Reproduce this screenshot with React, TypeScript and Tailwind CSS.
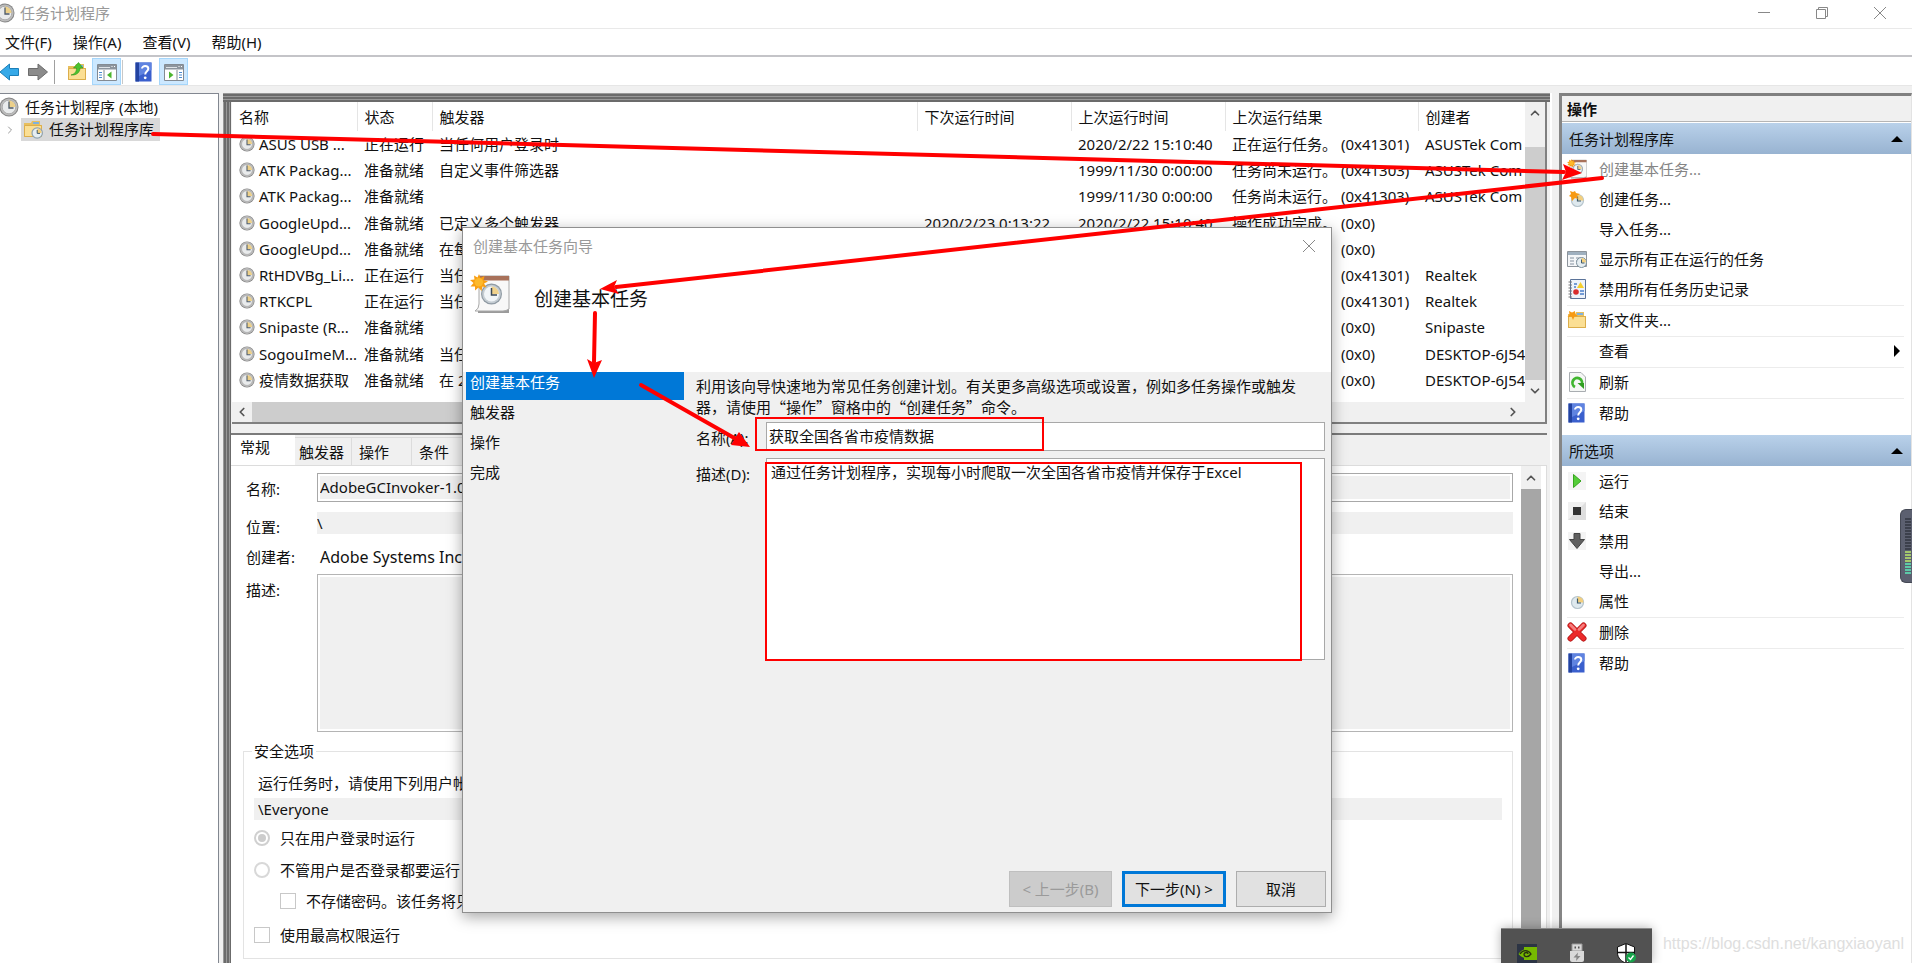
import React from 'react'
import { ChevronDown, ChevronLeft, ChevronRight, ChevronUp } from 'lucide-react'

type IconProps = { className?: string }

const ClockIcon: React.FC<IconProps> = ({ className = 'size-4' }) => (
  <svg viewBox="0 0 20 20" className={className} aria-hidden="true">
    <circle cx="10" cy="10" r="9.5" fill="#858585" />
    <circle cx="10" cy="10" r="8.6" fill="#bdbdbd" />
    <circle cx="10" cy="10" r="6.8" fill="#e9ebec" stroke="#a3a3a3" strokeWidth="0.8" />
    <path d="M10 10V3.6A6.4 6.4 0 0 1 16.4 10Z" fill="#ecd08a" />
    <path d="M10 4.5V11H14.5" fill="none" stroke="#4d5a66" strokeWidth="1.3" />
  </svg>
)

const SmallClockIcon: React.FC<{ star?: boolean }> = ({ star }) => (
  <svg viewBox="0 0 20 20" className="size-5" aria-hidden="true">
    <circle cx="10.5" cy="11.5" r="6" fill="#dfe9ee" stroke="#b4c3cb" strokeWidth="1.2" />
    <path d="M10.5 11.5V5.6A6 6 0 0 1 16.5 11.5Z" fill="#f3cf7e" />
    <path d="M10.5 7.5V12H14" fill="none" stroke="#3e5a6b" strokeWidth="1.2" />
    {star && (
      <path d="M3 2l3 1 2-1 1 2 4 1-3 2 1 3-3-1-3 3-1-4-2-1 2-2Z" fill="#f79a12" />
    )}
  </svg>
)

const HelpIcon: React.FC<IconProps> = ({ className = 'size-5' }) => (
  <svg viewBox="0 0 20 20" className={className} aria-hidden="true">
    <rect x="1.5" y="0.5" width="16" height="19" fill="#3a5fcd" />
    <rect x="1.5" y="0.5" width="3.5" height="19" fill="#2343a0" />
    <path d="M5 0.5H17.5V8L5 14Z" fill="#5f83e0" />
    <path
      d="M8 6.6C8 3.2 14.3 3.2 14.3 6.8C14.3 9.2 11.2 9.4 11.2 12.6"
      fill="none"
      stroke="#fff"
      strokeWidth="2"
    />
    <circle cx="11.2" cy="15.8" r="1.4" fill="#fff" />
  </svg>
)

const FolderBase = () => (
  <>
    <path d="M1 4H8L9 2H17V6H19V18H1Z" fill="#e8bf5d" />
    <path d="M10 3H16V5H10Z" fill="#7fb2e0" />
    <path d="M1.5 6.5H18.5V17.5H1.5Z" fill="#fbdf94" stroke="#dcae4b" />
  </>
)

const FolderClockIcon = () => (
  <svg viewBox="0 0 20 20" className="size-5" aria-hidden="true">
    <FolderBase />
    <circle cx="14.2" cy="14" r="5.2" fill="#e6eef2" stroke="#8fa2ae" strokeWidth="1.2" />
    <path d="M14.2 14V9.6A4.5 4.5 0 0 1 18.6 14Z" fill="#f3cf7e" />
    <path d="M14.2 11V14.4H17" fill="none" stroke="#3e5a6b" />
  </svg>
)

const FolderUpIcon = () => (
  <svg viewBox="0 0 20 20" className="size-5" aria-hidden="true">
    <FolderBase />
    <path
      d="M4 13C8 12 9.5 9.5 9.5 6H6.5L11.5 0.5L16 6H13C13 10 10 13.5 4 13Z"
      fill="#4cc32f"
      stroke="#2f9419"
      strokeWidth="0.6"
    />
  </svg>
)

const FolderNewIcon = () => (
  <svg viewBox="0 0 20 20" className="size-5" aria-hidden="true">
    <FolderBase />
    <path d="M2 1L5 2.5L8 1L8 4L11 6L7.5 6.5L6 10L4.5 6.5L0.5 7L2.5 4.5Z" fill="#f79a12" />
  </svg>
)

const BasicTaskIcon: React.FC<IconProps> = ({ className = 'size-5' }) => (
  <svg viewBox="0 0 40 40" className={className} aria-hidden="true">
    <path d="M8 34H39V39H8Z" fill="#9b9b9b" />
    <path d="M9 2H39V35Q36 37 33 37H5Q9 35 9 30Z" fill="#f8f8f8" stroke="#a8a8a8" />
    <path d="M9 2H39V6.5H9Z" fill="#a8715a" />
    <circle cx="21.5" cy="20" r="10.5" fill="#8f9aa3" />
    <circle cx="21.5" cy="20" r="9.3" fill="#c4ccd2" />
    <circle cx="21.5" cy="20" r="7.5" fill="#f1f5f8" />
    <path d="M21.5 20V12.5A7.5 7.5 0 0 1 29 20Z" fill="#f0d28c" />
    <path d="M21.5 14V21H27" fill="none" stroke="#3d4a55" strokeWidth="1.5" />
    <path
      d="M9 0L10.5 4L14.5 2L13.5 6L18 7.5L14 9.5L16.500 13.500L12.500 12.500L11.500 17L8.500 13.500L5 16.500L5 12.500L0.500 12.500L3.500 9L0 6L4.500 5.500L4 1.500L7.500 3.500Z"
      fill="#f99f12"
    />
    <circle cx="8.800" cy="8.300" r="4.300" fill="#fdb92a" />
  </svg>
)

const RunningTasksIcon = () => (
  <svg viewBox="0 0 20 20" className="size-5" aria-hidden="true">
    <path d="M0.5 2.5H19.5V17.5H0.5Z" fill="#f4f6f8" stroke="#8d949b" />
    <path d="M1 3H19V6H1Z" fill="#9fb0bf" />
    <path d="M3 9H7M9 9H13M3 12H7M9 12H11M3 15H7" stroke="#8592a0" strokeWidth="1.2" />
    <circle cx="14.5" cy="13.5" r="5" fill="#e6eef2" stroke="#7c909c" />
    <path d="M14.5 13.5V9A4.5 4.5 0 0 1 19 13.5Z" fill="#f3cf7e" />
    <path d="M14.5 10.5V14H17.5" fill="none" stroke="#3e5a6b" />
  </svg>
)

const HistoryIcon = () => (
  <svg viewBox="0 0 20 20" className="size-5" aria-hidden="true">
    <path d="M3.5 0.5H18.5V19.5H3.5Z" fill="#eef3fa" stroke="#5b7399" />
    <path d="M1.5 3H5M1.5 6H5M1.5 9H5M1.5 12H5M1.5 15H5M1.5 18H5" stroke="#777" />
    <path d="M13.5 3L17 9H10Z" fill="#f6cf2c" />
    <circle cx="9" cy="13" r="2.8" fill="#d92c2c" />
    <path d="M7 5H10M7 8H9M13 12H17M13 15H17" stroke="#4b7fc9" strokeWidth="1.3" />
  </svg>
)

const RefreshIcon = () => (
  <svg viewBox="0 0 20 20" className="size-5" aria-hidden="true">
    <path d="M2.5 0.5H14L18.5 5V19.5H2.5Z" fill="#f5f7f5" stroke="#a9adb1" />
    <path d="M8 15A4.800 4.800 0 1 1 14.500 13" fill="none" stroke="#3fb52e" strokeWidth="2.8" />
    <path d="M10.5 11H17V17Z" fill="#2f9e20" />
  </svg>
)

const RunIcon = () => (
  <svg viewBox="0 0 20 20" className="size-5" aria-hidden="true">
    <path d="M1 1H19V19H1Z" fill="#f4f4f4" />
    <path d="M6.5 3.5L14 10L6.5 16.5Z" fill="#54cd38" stroke="#37a51f" />
  </svg>
)

const StopIcon = () => (
  <svg viewBox="0 0 20 20" className="size-5" aria-hidden="true">
    <path d="M1 1H19V19H1Z" fill="#dedede" />
    <path d="M1 1H19L1 19Z" fill="#f0f0f0" />
    <path d="M6 6H14V14H6Z" fill="#333" />
  </svg>
)

const DisableIcon = () => (
  <svg viewBox="0 0 20 20" className="size-5" aria-hidden="true">
    <path d="M1 1H19V19H1Z" fill="#f4f4f4" />
    <path d="M7 2.5H13V8.5H17.5L10 17.5L2.5 8.5H7Z" fill="#606060" stroke="#444" />
  </svg>
)

const DeleteIcon = () => (
  <svg viewBox="0 0 20 20" className="size-5" aria-hidden="true">
    <path d="M3.5 3.5L16.5 16.5M16.5 3.5L3.5 16.5" stroke="#b01515" strokeWidth="6" strokeLinecap="round" />
    <path d="M3.5 3.5L16.5 16.5M16.5 3.5L3.5 16.5" stroke="#ec2b2b" strokeWidth="4.5" strokeLinecap="round" />
    <path d="M3.5 3L8 7.5M16.5 3L12 7.5" stroke="#f58080" strokeWidth="2.5" strokeLinecap="round" />
  </svg>
)

const ArrowIcon: React.FC<{ forward?: boolean }> = ({ forward }) =>
  forward ? (
    <svg viewBox="0 0 20 18" className="h-[18px] w-5" aria-hidden="true">
      <path d="M0.5 5.5H10V1L19.5 9L10 17V12.5H0.5Z" fill="#8b8b8b" stroke="#6c6c6c" />
    </svg>
  ) : (
    <svg viewBox="0 0 20 18" className="h-[18px] w-5" aria-hidden="true">
      <path d="M18.5 5.5H9.5V1L0 9L9.5 17V12.5H18.5Z" fill="#36a9e8" stroke="#1c7fb8" />
    </svg>
  )

const PaneIcon: React.FC<{ right?: boolean }> = ({ right }) => (
  <svg viewBox="0 0 20 18" className="h-[18px] w-5" aria-hidden="true">
    <path d="M0.5 1.5H19.5V17.5H0.5Z" fill="#fff" stroke="#848b93" />
    <path d="M1 2H19V6.5H1Z" fill="#8d959e" />
    <path d="M2 4.5H13" stroke="#dfe3e7" />
    <path d="M14.5 3.5H15.5M17 3.5H18" stroke="#fff" />
    {right ? (
      <>
        <path d="M13 7V17" stroke="#848b93" />
        <path d="M15 9.5H18M15 12H18M15 14.5H18" stroke="#4a8bd0" />
        <path d="M5 8.5L9.5 12L5 15.5Z" fill="#4cb52f" />
      </>
    ) : (
      <>
        <path d="M7 7V17" stroke="#848b93" />
        <path d="M2 9.5H5M2 12H5M2 14.5H5" stroke="#4a8bd0" />
        <path d="M14.5 8.5L10 12L14.5 15.5Z" fill="#4cb52f" />
      </>
    )}
  </svg>
)

const running = '正在运行'
const ready = '准备就绪'
const onLogon = '当任何用户登录时'
const resultRunning = '正在运行任务。 (0x41301)'
const resultNever = '任务尚未运行。 (0x41303)'
const resultOk = '操作成功完成。 (0x0)'

const columns = [
  { title: '名称', width: 'w-[125px]' },
  { title: '状态', width: 'w-[75px]' },
  { title: '触发器', width: '' },
  { title: '下次运行时间', width: 'w-[154px]' },
  { title: '上次运行时间', width: 'w-[154px]' },
  { title: '上次运行结果', width: 'w-[193px]' },
  { title: '创建者', width: 'w-[107px]' },
]

const tasks = [
  ['ASUS USB ...', running, onLogon, '', '2020/2/22 15:10:40', resultRunning, 'ASUSTek Com'],
  ['ATK Packag...', ready, '自定义事件筛选器', '', '1999/11/30 0:00:00', resultNever, 'ASUSTek Com'],
  ['ATK Packag...', ready, '', '', '1999/11/30 0:00:00', resultNever, 'ASUSTek Com'],
  ['GoogleUpd...', ready, '已定义多个触发器', '2020/2/23 0:13:22', '2020/2/22 15:10:40', resultOk, ''],
  ['GoogleUpd...', ready, '在每天', '', '', resultOk, ''],
  ['RtHDVBg_Li...', running, '当任何', '', '', resultRunning, 'Realtek'],
  ['RTKCPL', running, '当任何', '', '', resultRunning, 'Realtek'],
  ['Snipaste (R...', ready, '', '', '', resultOk, 'Snipaste'],
  ['SogouImeM...', ready, '当任何', '', '', resultOk, 'DESKTOP-6J54'],
  ['疫情数据获取', ready, '在 20', '', '', resultOk, 'DESKTOP-6J54'],
]

type Action = {
  label: string
  icon?: React.ReactNode
  line?: boolean
  muted?: boolean
  submenu?: boolean
}

const libraryActions: Action[] = [
  { label: '创建基本任务...', icon: <BasicTaskIcon />, muted: true },
  { label: '创建任务...', icon: <SmallClockIcon star /> },
  { label: '导入任务...' },
  { label: '显示所有正在运行的任务', icon: <RunningTasksIcon /> },
  { label: '禁用所有任务历史记录', icon: <HistoryIcon /> },
  { label: '新文件夹...', icon: <FolderNewIcon />, line: true },
  { label: '查看', line: true, submenu: true },
  { label: '刷新', icon: <RefreshIcon />, line: true },
  { label: '帮助', icon: <HelpIcon />, line: true },
]

const selectedActions: Action[] = [
  { label: '运行', icon: <RunIcon /> },
  { label: '结束', icon: <StopIcon /> },
  { label: '禁用', icon: <DisableIcon /> },
  { label: '导出...' },
  { label: '属性', icon: <SmallClockIcon /> },
  { label: '删除', icon: <DeleteIcon />, line: true },
  { label: '帮助', icon: <HelpIcon />, line: true },
]

const TitleBar = () => (
  <header className="flex h-[29px] shrink-0 items-center border-b border-[#e9e9e9] bg-white pb-0.5">
    <ClockIcon className="-ml-[5px] size-5" />
    <h1 className="ml-[5px] flex-1 text-[#999]">任务计划程序</h1>
    <button aria-label="最小化" className="flex w-[58px] justify-center">
      <svg viewBox="0 0 12 12" className="size-3">
        <path d="M0 5.5H12" stroke="#888" />
      </svg>
    </button>
    <button aria-label="还原" className="flex w-[58px] justify-center">
      <svg viewBox="0 0 12 12" className="size-3" fill="none" stroke="#888">
        <path d="M0.5 2.5H9.5V11.5H0.5ZM2.5 2.5V0.5H11.5V9.5H9.5" />
      </svg>
    </button>
    <button aria-label="关闭" className="mr-[3px] flex w-[58px] justify-center">
      <svg viewBox="0 0 12 12" className="size-3">
        <path d="M0 0L12 12M12 0L0 12" stroke="#888" />
      </svg>
    </button>
  </header>
)

const MenuBar = () => (
  <nav className="flex h-[28px] shrink-0 items-center gap-[21px] border-b-2 border-[#c4c4c8] bg-white pb-px pl-[5px]">
    {['文件(F)', '操作(A)', '查看(V)', '帮助(H)'].map((item) => (
      <button key={item}>{item}</button>
    ))}
  </nav>
)

const Toolbar = () => (
  <div className="flex h-[29px] shrink-0 items-center border-b border-[#e6e6e6] bg-white pt-px">
    <button aria-label="后退">
      <ArrowIcon />
    </button>
    <button aria-label="前进" className="ml-2">
      <ArrowIcon forward />
    </button>
    <span className="ml-1.5 h-6 w-px bg-[#a0a0a0]" />
    <button aria-label="上一级" className="ml-3">
      <FolderUpIcon />
    </button>
    <button
      aria-label="显示控制台树"
      className="ml-[5px] flex h-[27px] w-[29px] items-center justify-center border border-[#a5d6fb] bg-[#cce8ff]"
    >
      <PaneIcon />
    </button>
    <span className="ml-px h-6 w-px bg-[#c8c8c8]" />
    <button aria-label="帮助" className="ml-[11px]">
      <HelpIcon />
    </button>
    <button
      aria-label="显示操作窗格"
      className="ml-[5px] flex h-[27px] w-[29px] items-center justify-center border border-[#a5d6fb] bg-[#cce8ff]"
    >
      <PaneIcon right />
    </button>
  </div>
)

const TreePane = () => (
  <aside className="w-[219px] shrink-0 border-t border-r border-[#828790] bg-white pt-0.5">
    <div className="flex h-[22px] items-center">
      <ClockIcon className="-ml-px size-5" />
      <span className="ml-1.5">任务计划程序 (本地)</span>
    </div>
    <div className="flex h-[23px] items-center">
      <ChevronRight className="ml-1 size-3 text-[#9a9a9a]" />
      <button className="ml-[5px] flex h-[23px] items-center gap-1.5 bg-[#d9d9d9] pr-1.5 pb-px pl-0.5">
        <FolderClockIcon />
        任务计划程序库
      </button>
    </div>
  </aside>
)

const TaskTable = () => (
  <section className="ml-px border-r-2 border-b-2 border-[#808080] bg-white">
    <div className="flex h-[300px]">
      <div className="min-w-0 flex-1 overflow-hidden">
        <table className="h-[291px] w-full table-fixed border-collapse text-left whitespace-nowrap">
          <thead>
            <tr className="h-[29px]">
              {columns.map(({ title, width }) => (
                <th
                  key={title}
                  className={`${width} border-r border-[#e5e5e5] py-0 pl-[7px] font-normal last:border-r-0`}
                >
                  {title}
                </th>
              ))}
            </tr>
          </thead>
          <tbody>
            {tasks.map((task, i) => (
              <tr key={i}>
                {task.map((value, j) => (
                  <td key={j} className="overflow-hidden py-0 pl-[7px]">
                    {j === 0 ? (
                      <span className="flex items-center gap-1">
                        <ClockIcon className="size-4 shrink-0" />
                        {value}
                      </span>
                    ) : (
                      value
                    )}
                  </td>
                ))}
              </tr>
            ))}
          </tbody>
        </table>
      </div>
      <div className="flex w-5 flex-col items-center bg-[#f0f0f0] text-[#555]">
        <ChevronUp className="my-1 size-3.5" strokeWidth={3} />
        <div className="mt-[23px] w-full flex-1 bg-[#cdcdcd]" />
        <ChevronDown className="my-1 size-3.5" strokeWidth={3} />
      </div>
    </div>
    <div className="flex h-5 items-center bg-[#f0f0f0] pr-[25px] text-[#555]">
      <ChevronLeft className="mx-[3px] size-3.5" strokeWidth={3} />
      <div className="h-full w-4/5 bg-[#cdcdcd]" />
      <ChevronRight className="ml-auto size-3.5" strokeWidth={3} />
    </div>
  </section>
)

const SecurityOptions = () => (
  <fieldset className="mt-2 border border-[#e3e3e3] pr-2.5 pb-3 pl-2.5">
    <legend className="-ml-0.5 px-0.5">安全选项</legend>
    <p className="mt-2.5 pl-1">运行任务时，请使用下列用户帐户:</p>
    <input
      aria-label="用户帐户"
      readOnly
      defaultValue="\Everyone"
      className="mt-1 block h-[22px] w-full bg-[#f0f0f0] px-1"
    />
    <label className="mt-[7px] flex items-center gap-2.5">
      <input
        type="radio"
        name="logon"
        disabled
        defaultChecked
        className="size-4 appearance-none rounded-full border-2 border-[#d0d0d0] bg-[#ccc] bg-clip-content p-0.5"
      />
      只在用户登录时运行
    </label>
    <label className="mt-2.5 flex items-center gap-2.5">
      <input
        type="radio"
        name="logon"
        disabled
        className="size-4 appearance-none rounded-full border-2 border-[#d8d8d8]"
      />
      不管用户是否登录都要运行
    </label>
    <label className="mt-[9px] flex items-center gap-2.5 pl-[26px]">
      <input type="checkbox" disabled className="size-4 appearance-none border border-[#c8c8c8]" />
      不存储密码。该任务将只
    </label>
    <label className="mt-3 flex items-center gap-2.5">
      <input type="checkbox" disabled className="size-4 appearance-none border border-[#c8c8c8]" />
      使用最高权限运行
    </label>
  </fieldset>
)

const tabs = [
  { title: '触发器', width: 'w-[57px] pl-1' },
  { title: '操作', width: 'w-[60px] pl-[7px]' },
  { title: '条件', width: 'w-[60px] pl-[7px]' },
]

const TaskDetails = () => (
  <section className="mt-[9px] flex min-h-0 flex-1 flex-col border-t-2 border-[#7b7b7b]">
    <div className="flex h-[30px] shrink-0 items-end" role="tablist">
      <button role="tab" aria-selected="true" className="h-full w-16 bg-white pb-1.5 pl-[9px] text-left">
        常规
      </button>
      {tabs.map(({ title, width }) => (
        <button
          key={title}
          role="tab"
          aria-selected="false"
          className={`${width} h-7 border-t border-r border-[#dcdcdc] text-left`}
        >
          {title}
        </button>
      ))}
    </div>
    <div className="flex min-h-0 flex-1 border-t border-r border-[#dcdcdc] bg-white pr-[5px]">
      <div className="min-w-0 flex-1 pt-[7px] pr-2 pl-3">
        <div className="flex items-center pl-[3px]">
          <label htmlFor="task-name" className="w-[71px] shrink-0 pt-0.5">
            名称:
          </label>
          <input
            id="task-name"
            readOnly
            defaultValue="AdobeGCInvoker-1.0"
            className="h-[29px] min-w-0 flex-1 border border-[#a8a8a8] bg-[#f0f0f0] px-0.5 pb-0.5 ring-2 ring-white ring-inset"
          />
        </div>
        <div className="mt-2.5 flex items-start pl-[3px]">
          <label htmlFor="task-location" className="w-[71px] shrink-0 pt-1">
            位置:
          </label>
          <input
            id="task-location"
            readOnly
            defaultValue="\"
            className="h-[22px] min-w-0 flex-1 bg-[#f0f0f0]"
          />
        </div>
        <div className="mt-2 flex items-center pl-[3px]">
          <span className="w-[74px] shrink-0">创建者:</span>
          <span className="text-base/[22px]">Adobe Systems Incorporated</span>
        </div>
        <div className="mt-1.5 flex items-start pl-[3px]">
          <label htmlFor="task-note" className="w-[71px] shrink-0 pt-[5px]">
            描述:
          </label>
          <textarea
            id="task-note"
            readOnly
            className="h-[158px] min-w-0 flex-1 resize-none border border-[#b4b4b4] bg-[#f0f0f0] ring-2 ring-white ring-inset"
          />
        </div>
        <SecurityOptions />
      </div>
      <div className="flex w-5 flex-col items-center bg-[#f0f0f0] pt-px text-[#555]">
        <ChevronUp className="my-1 size-3.5" strokeWidth={3} />
        <div className="w-full flex-1 bg-[#a6a6a6]" />
      </div>
    </div>
  </section>
)

const ActionGroup: React.FC<{ title: string; actions: Action[] }> = ({
  title,
  actions,
}) => (
  <section>
    <h3 className="flex h-[31px] items-center justify-between bg-linear-to-b from-[#b9d1ea] to-[#98b3d1] pr-2 pl-[7px]">
      {title}
      <svg viewBox="0 0 12 6" className="h-1.5 w-3" aria-hidden="true">
        <path d="M6 0L12 6H0Z" />
      </svg>
    </h3>
    <ul className="mt-px pr-[7px] pl-[5px]">
      {actions.map(({ label, icon, line, muted, submenu }) => (
        <li key={label} className={line ? 'border-t border-[#ececec]' : ''}>
          <button className="flex h-[30px] w-full items-center gap-3 pb-0.5 text-left">
            <span className="size-5">{icon}</span>
            <span className={muted ? 'flex-1 text-[#858585]' : 'flex-1'}>{label}</span>
            {submenu && (
              <svg viewBox="0 0 6 12" className="mr-1 h-3 w-1.5" aria-hidden="true">
                <path d="M0 0L6 6L0 12Z" />
              </svg>
            )}
          </button>
        </li>
      ))}
    </ul>
  </section>
)

const ActionsPane = () => (
  <aside className="ml-[7px] flex w-[353px] shrink-0 flex-col border-t-3 border-r border-l-3 border-t-[#808080] border-r-[#e3e3e3] border-l-[#858585] bg-white">
    <h2 className="mb-px h-[26px] shrink-0 border-b border-[#b5b5b5] bg-[#f0f0f0] pt-0.5 pl-[5px] font-bold">
      操作
    </h2>
    <ActionGroup title="任务计划程序库" actions={libraryActions} />
    <div className="h-1.5" />
    <ActionGroup title="所选项" actions={selectedActions} />
  </aside>
)

const WizardDialog = () => (
  <div
    role="dialog"
    aria-label="创建基本任务向导"
    className="absolute top-[227px] left-[462px] flex min-h-[686px] w-[870px] flex-col border border-[#8f8f8f] bg-[#f0f0f0] shadow-[0_4px_14px_rgba(0,0,0,0.35)]"
  >
    <div className="bg-white">
      <div className="flex h-9 items-center justify-between pr-4 pl-2.5 text-[#999]">
        创建基本任务向导
        <button aria-label="关闭">
          <svg viewBox="0 0 12 12" className="size-3">
            <path d="M0 0L12 12M12 0L0 12" stroke="#888" />
          </svg>
        </button>
      </div>
      <div className="flex h-[108px] items-start pt-2.5 pl-[7px]">
        <BasicTaskIcon className="size-10" />
        <h2 className="ml-6 pt-3.5 text-[19px]">创建基本任务</h2>
      </div>
    </div>
    <div className="flex flex-1">
      <ol className="ml-[3px] w-[218px] shrink-0 leading-5">
        <li className="h-7 bg-[#0078d7] pl-1 text-white">创建基本任务</li>
        <li className="mt-0.5 h-[30px] pl-1">触发器</li>
        <li className="h-[30px] pl-1">操作</li>
        <li className="h-[30px] pl-1">完成</li>
      </ol>
      <form className="min-w-0 flex-1 pt-[3px] pr-1.5 pl-3">
        <p className="pr-1 font-['Noto_Sans_CJK_SC',sans-serif] leading-[21px]">
          利用该向导快速地为常见任务创建计划。有关更多高级选项或设置，例如多任务操作或触发器，请使用“操作”窗格中的“创建任务”命令。
        </p>
        <div className="mt-[5px] flex items-center">
          <label htmlFor="new-name" className="w-[70px] shrink-0 pt-0.5">
            名称(A):
          </label>
          <input
            id="new-name"
            defaultValue="获取全国各省市疫情数据"
            className="h-[29px] min-w-0 flex-1 border border-[#a8a8a8] bg-white px-0.5 pb-0.5"
          />
        </div>
        <div className="mt-[7px] flex items-start">
          <label htmlFor="new-note" className="w-[70px] shrink-0 pt-[5px]">
            描述(D):
          </label>
          <textarea
            id="new-note"
            defaultValue="通过任务计划程序，实现每小时爬取一次全国各省市疫情并保存于Excel"
            className="h-[202px] min-w-0 flex-1 resize-none border border-[#a8a8a8] bg-white px-1 pt-0.5"
          />
        </div>
      </form>
    </div>
    <div className="flex justify-end gap-2.5 pr-[5px] pb-[5px]">
      <button disabled className="h-9 w-[103px] border border-[#bfbfbf] bg-[#ccc] text-[#9a9a9a]">
        &lt; 上一步(B)
      </button>
      <button className="h-9 w-[104px] border-3 border-[#0078d7] bg-[#e1e1e1]">
        下一步(N) &gt;
      </button>
      <button className="h-9 w-[90px] border border-[#adadad] bg-[#e1e1e1]">取消</button>
    </div>
  </div>
)

// Red pen marks drawn over the whole screen
const Annotations = () => (
  <svg className="pointer-events-none absolute inset-0 size-full" aria-hidden="true">
    <g fill="none" stroke="#f00" strokeWidth="4" strokeLinecap="round">
      <path d="M153 134L1564 172" />
      <path d="M1602 178L616 287" />
      <path d="M595 313L594 362" />
      <path d="M641 385L736 439" />
    </g>
    <g fill="#f00">
      <path d="M1582 173L1562 180L1566 172L1563 164Z" />
      <path d="M600 289L617 280L614 287L619 294Z" />
      <path d="M594 378L587 359L594 363L602 360Z" />
      <path d="M750 447L731 445L735 438L739 432Z" />
    </g>
    <g fill="none" stroke="#f00" strokeWidth="2">
      <rect x="756" y="418" width="287" height="32" />
      <rect x="766" y="463" width="535" height="197" />
    </g>
  </svg>
)

const TrayPopup = () => (
  <div className="absolute right-[260px] bottom-0 flex h-[35px] w-[151px] items-end justify-between border-t border-[#8a8a8a] bg-[#525252] px-4 shadow-[0_0_10px_rgba(0,0,0,0.3)]">
    <svg viewBox="0 0 20 20" className="size-5" aria-hidden="true">
      <rect y="1" width="20" height="19" fill="#2c3444" />
      <rect x="7" y="4" width="13" height="13" fill="#76b900" />
      <path d="M1.5 11C5 5 12 4.5 16.5 10.5C13 16 6 17 1.5 11Z" fill="#76b900" />
      <path d="M3 11C6 6.5 11 6.5 14 11C11 15 7 14 7 11C8 9 11 9 11 11" fill="none" stroke="#26300f" strokeWidth="1.3" />
    </svg>
    <svg viewBox="0 0 20 20" className="size-5" aria-hidden="true">
      <path d="M5 1H15V8H5Z" fill="#d8d8d8" stroke="#999" />
      <path d="M7.5 3.5H9V5.5H7.5ZM11 3.5H12.5V5.5H11Z" fill="#555" />
      <path d="M3 8H17V17Q17 19 15 19H5Q3 19 3 17Z" fill="#d9d9d9" />
      <path d="M11 9.5L6.5 14.5H9.5L9 18L13.5 13H10.5Z" fill="#888" />
    </svg>
    <svg viewBox="0 0 20 20" className="size-5" aria-hidden="true">
      <path d="M10 0.5L18.5 4V10C18.5 15 14 19 10 20C6 19 1.5 15 1.5 10V4Z" fill="#fff" stroke="#111" />
      <path d="M10 1V19.5M2 9.5H18" stroke="#111" strokeWidth="1.5" />
      <circle cx="15" cy="14.5" r="5" fill="#16a34a" />
      <path d="M12.5 14.5L14.5 16.5L17.5 12.5" fill="none" stroke="#fff" strokeWidth="1.3" />
    </svg>
  </div>
)

const LevelMeter = () => (
  <div className="absolute top-[509px] right-0 flex h-[74px] w-3 flex-col items-end justify-center gap-px rounded-l-md border border-r-0 border-[#454955] bg-[#5c6070] pr-px">
    {Array.from({ length: 19 }, (_, i) => (
      <span
        key={i}
        className={`h-0.5 w-1.5 ${i < 11 ? 'bg-[#3c404c]' : i < 15 ? 'bg-[#a3c66c]' : 'bg-[#5cc9a7]'}`}
      />
    ))}
  </div>
)

const App: React.FC = () => (
  <div
    lang="zh-CN"
    className="relative flex h-screen flex-col overflow-hidden bg-[#f0f0f0] font-['Noto_Sans','Noto_Sans_CJK_SC',sans-serif] text-[15px] leading-[22px] text-[#111]"
  >
    <TitleBar />
    <MenuBar />
    <Toolbar />
    <main className="flex min-h-0 flex-1 pt-[7px]">
      <TreePane />
      <div className="ml-1 flex min-w-0 flex-1 flex-col border-r-2 border-white">
        <div className="h-[9px] shrink-0 bg-[repeating-linear-gradient(#999_0_1px,#6b6b6b_1px_3px)]" />
        <div className="flex min-h-0 flex-1">
          <div className="w-2 shrink-0 bg-[repeating-linear-gradient(90deg,#999_0_1px,#6b6b6b_1px_3px)]" />
          <div className="flex min-w-0 flex-1 flex-col pr-[3px]">
            <TaskTable />
            <TaskDetails />
          </div>
        </div>
      </div>
      <ActionsPane />
    </main>
    <WizardDialog />
    <TrayPopup />
    <LevelMeter />
    <p className="absolute right-2 bottom-[7px] font-['Liberation_Sans',sans-serif] text-base text-[#dedede]">
      https://blog.csdn.net/kangxiaoyanl
    </p>
    <Annotations />
  </div>
)

export default App
